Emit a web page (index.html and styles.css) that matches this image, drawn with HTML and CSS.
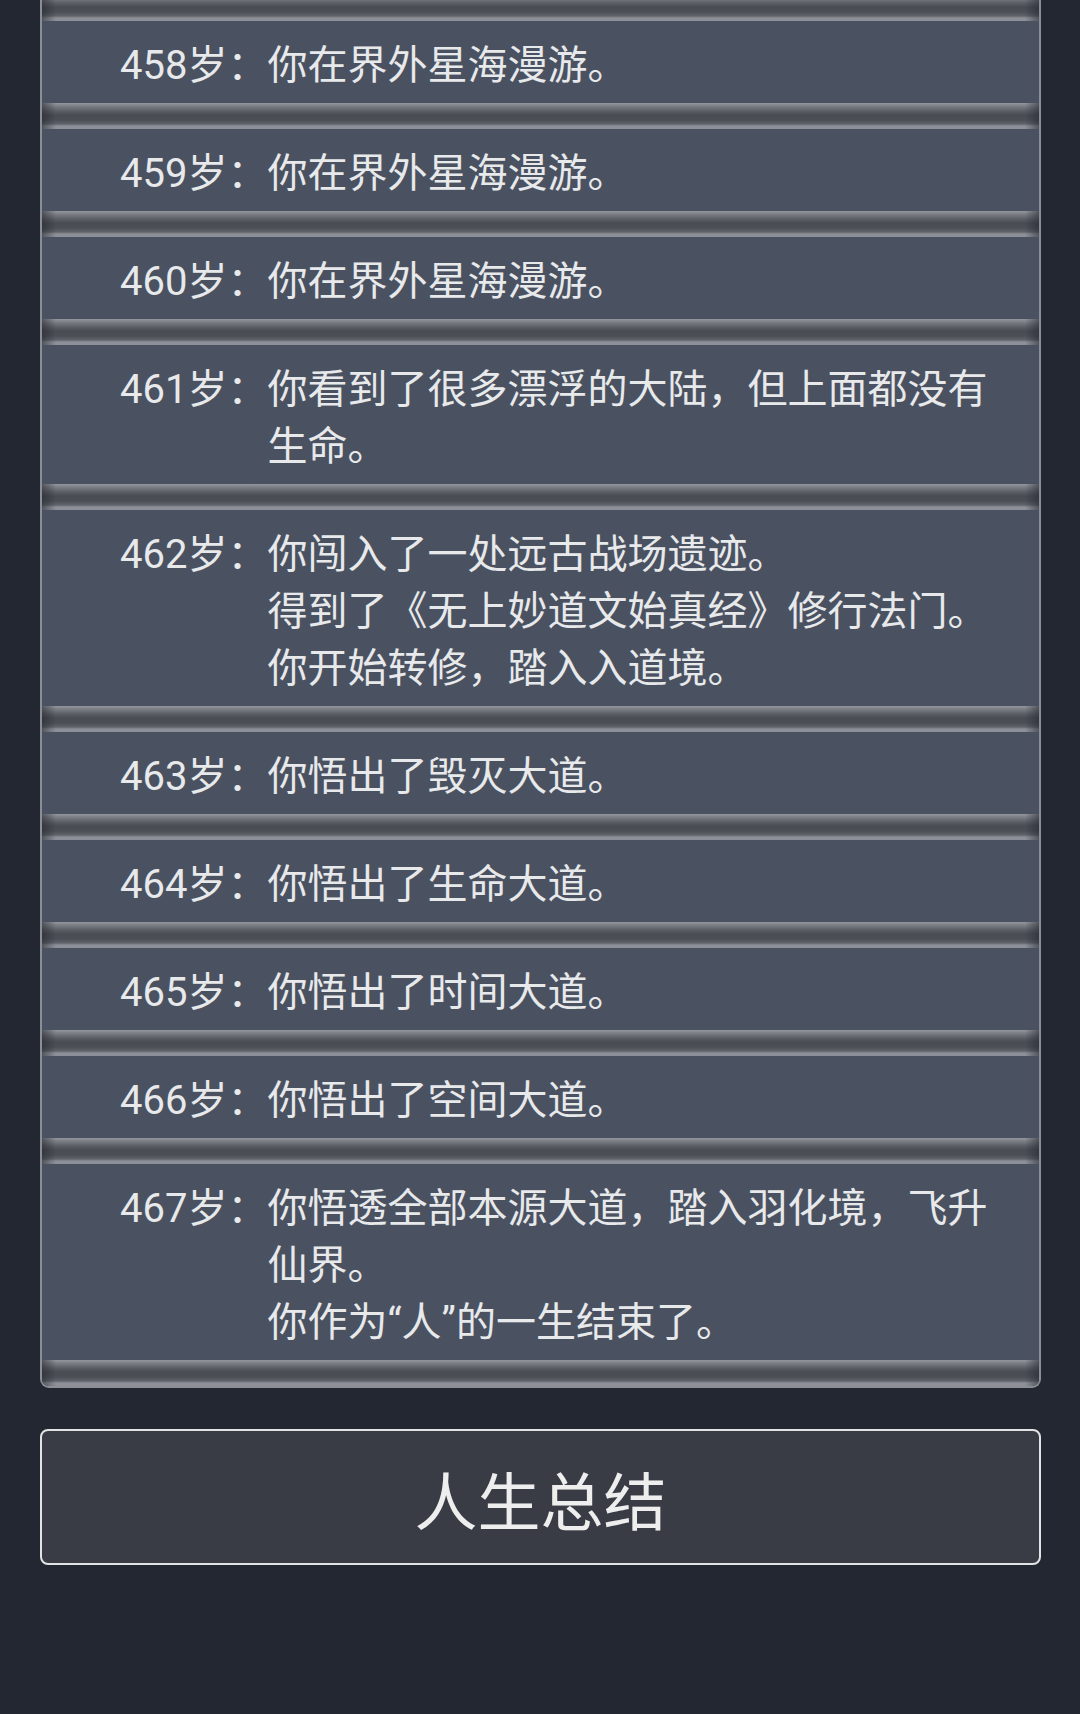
FILE: index.html
```html
<!DOCTYPE html>
<html lang="zh">
<head>
    <meta charset="UTF-8">
    <meta name="viewport" content="width=device-width, initial-scale=1.0">
    <title>人生重开模拟器</title>
    <link rel="stylesheet" href="styles.css">
</head>
<body>
    <div class="page">
        <ul class="trajectory">
            <li><span class="age">458岁：</span><span class="event">你在界外星海漫游。</span></li>
            <li><span class="age">459岁：</span><span class="event">你在界外星海漫游。</span></li>
            <li><span class="age">460岁：</span><span class="event">你在界外星海漫游。</span></li>
            <li><span class="age">461岁：</span><span class="event">你看到了很多漂浮的大陆，但上面都没有生命。</span></li>
            <li><span class="age">462岁：</span><span class="event">你闯入了一处远古战场遗迹。<br>得到了《无上妙道文始真经》修行法门。<br>你开始转修，踏入入道境。</span></li>
            <li><span class="age">463岁：</span><span class="event">你悟出了毁灭大道。</span></li>
            <li><span class="age">464岁：</span><span class="event">你悟出了生命大道。</span></li>
            <li><span class="age">465岁：</span><span class="event">你悟出了时间大道。</span></li>
            <li><span class="age">466岁：</span><span class="event">你悟出了空间大道。</span></li>
            <li><span class="age">467岁：</span><span class="event">你悟透全部本源大道，踏入羽化境，飞升仙界。<br>你作为“人”的一生结束了。</span></li>
        </ul>
        <button class="summary">人生总结</button>
    </div>
</body>
</html>
```

FILE: styles.css
```css
body {
    margin: 0;
    background: #222731;
    font-family: Roboto, "Noto Sans CJK SC", sans-serif;
    color: #e8e9eb;
}
.page {
    padding: 0 39px 0 40px;
}
.trajectory {
    list-style: none;
    margin: -5px 0 0;
    padding: 0;
    border: 2px solid #8b8e94;
    border-top: none;
    border-radius: 0 0 9px 9px;
    overflow: hidden;
}
/* 每条记录上方的凹槽分隔 */
.trajectory li,
.trajectory::after {
    background:
        linear-gradient(to right, rgba(34, 38, 46, 0.55), rgba(34, 38, 46, 0) 14px, rgba(34, 38, 46, 0) calc(100% - 14px), rgba(34, 38, 46, 0.55)) top / 100% 26px no-repeat,
        linear-gradient(to bottom, #94979d 0, #7c7f86 3px, #5c5e65 8px, #4a4c53 12px, #4c4f56 17px, #60636a 21px, #8d9098 23px, #8d9098 26px) top / 100% 26px no-repeat,
        #4a5261;
}
.trajectory li {
    display: flex;
    padding: 42px 32px 9px 78px;
    font-size: 40px;
    line-height: 57px;
}
.trajectory::after {
    content: "";
    display: block;
    height: 26px;
}
.age {
    flex: none;
}
.event {
    flex: 1;
}
.summary {
    display: block;
    width: 100%;
    height: 136px;
    margin-top: 41px;
    background: #393c45;
    border: 2px solid #e2e3e5;
    border-radius: 8px;
    color: #eeeeee;
    font-family: Roboto, "Noto Sans CJK SC", sans-serif;
    font-size: 63px;
    padding: 0;
}
```
